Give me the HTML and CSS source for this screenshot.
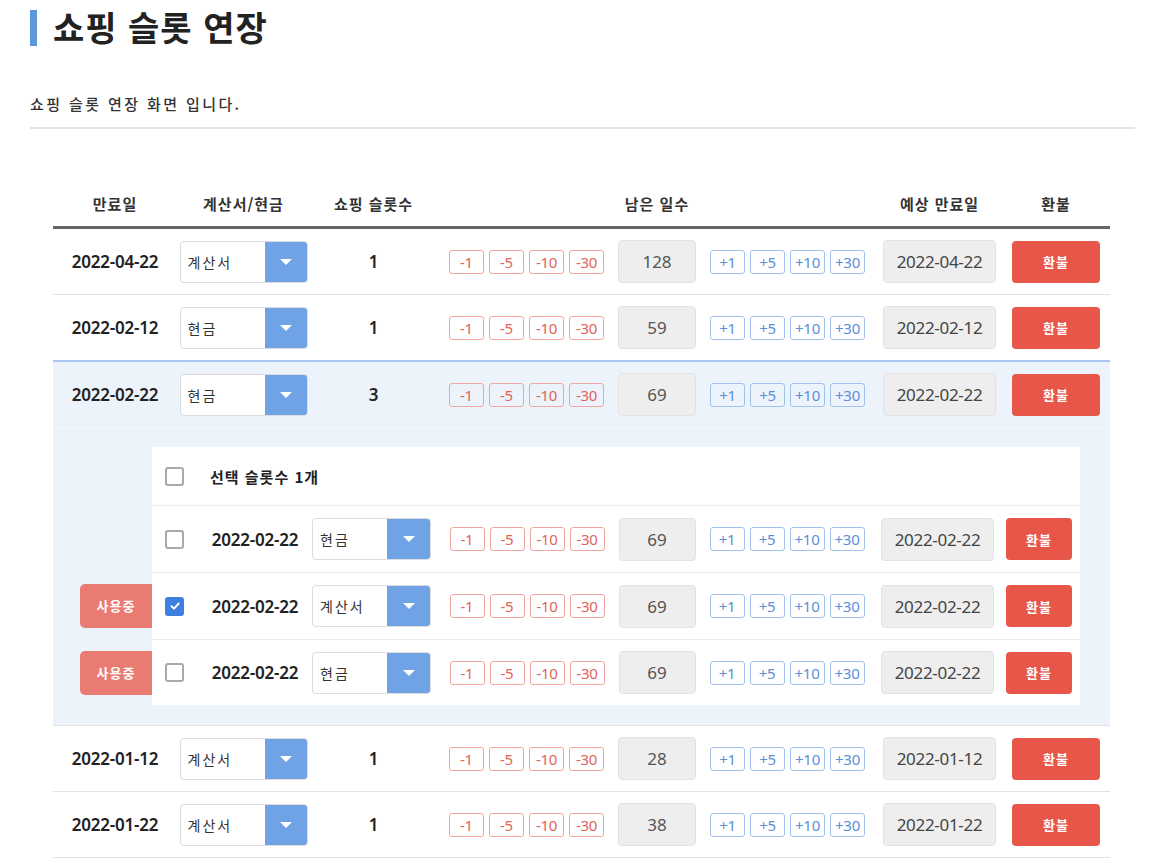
FILE: index.html
```html
<!DOCTYPE html>
<html lang="ko">
<head>
<meta charset="utf-8">
<title>쇼핑 슬롯 연장</title>
<link rel="stylesheet" href="styles.css">
</head>
<body>
<div class="page">
  <h1 class="title">쇼핑 슬롯 연장</h1>
  <p class="desc">쇼핑 슬롯 연장 화면 입니다.</p>

  <div class="table">
    <div class="row head">
      <div>만료일</div>
      <div>계산서/현금</div>
      <div>쇼핑 슬롯수</div>
      <div>남은 일수</div>
      <div>예상 만료일</div>
      <div>환불</div>
    </div>

    <div class="row">
      <div class="date">2022-04-22</div>
      <div><div class="select"><span>계산서</span><i class="caret"></i></div></div>
      <div class="count">1</div>
      <div class="days"><div class="btns minus"><b>-1</b><b>-5</b><b>-10</b><b>-30</b></div><div class="val">128</div><div class="btns plus"><b>+1</b><b>+5</b><b>+10</b><b>+30</b></div></div>
      <div><div class="dbox">2022-04-22</div></div>
      <div><button class="refund">환불</button></div>
    </div>

    <div class="row before-open">
      <div class="date">2022-02-12</div>
      <div><div class="select"><span>현금</span><i class="caret"></i></div></div>
      <div class="count">1</div>
      <div class="days"><div class="btns minus"><b>-1</b><b>-5</b><b>-10</b><b>-30</b></div><div class="val">59</div><div class="btns plus"><b>+1</b><b>+5</b><b>+10</b><b>+30</b></div></div>
      <div><div class="dbox">2022-02-12</div></div>
      <div><button class="refund">환불</button></div>
    </div>

    <div class="group">
      <div class="row open">
        <div class="date">2022-02-22</div>
        <div><div class="select"><span>현금</span><i class="caret"></i></div></div>
        <div class="count">3</div>
        <div class="days"><div class="btns minus"><b>-1</b><b>-5</b><b>-10</b><b>-30</b></div><div class="val">69</div><div class="btns plus"><b>+1</b><b>+5</b><b>+10</b><b>+30</b></div></div>
        <div><div class="dbox">2022-02-22</div></div>
        <div><button class="refund">환불</button></div>
      </div>
      <div class="detail">
        <div class="panel">
          <div class="prow phead">
            <span class="check"></span>
            <strong>선택 슬롯수 1개</strong>
          </div>
          <div class="prow">
            <div><span class="check"></span></div>
            <div class="date">2022-02-22</div>
            <div><div class="select sm"><span>현금</span><i class="caret"></i></div></div>
            <div class="days"><div class="btns minus"><b>-1</b><b>-5</b><b>-10</b><b>-30</b></div><div class="val sm">69</div><div class="btns plus"><b>+1</b><b>+5</b><b>+10</b><b>+30</b></div></div>
            <div><div class="dbox">2022-02-22</div></div>
            <div><button class="refund sm">환불</button></div>
          </div>
          <div class="prow">
            <span class="badge">사용중</span>
            <div><span class="check on"><svg viewBox="0 0 12 12" width="12" height="12"><path d="M2.5 6.2 L5 8.6 L9.6 3.6" fill="none" stroke="#fff" stroke-width="2" stroke-linecap="round" stroke-linejoin="round"/></svg></span></div>
            <div class="date">2022-02-22</div>
            <div><div class="select sm"><span>계산서</span><i class="caret"></i></div></div>
            <div class="days"><div class="btns minus"><b>-1</b><b>-5</b><b>-10</b><b>-30</b></div><div class="val sm">69</div><div class="btns plus"><b>+1</b><b>+5</b><b>+10</b><b>+30</b></div></div>
            <div><div class="dbox">2022-02-22</div></div>
            <div><button class="refund sm">환불</button></div>
          </div>
          <div class="prow last">
            <span class="badge">사용중</span>
            <div><span class="check"></span></div>
            <div class="date">2022-02-22</div>
            <div><div class="select sm"><span>현금</span><i class="caret"></i></div></div>
            <div class="days"><div class="btns minus"><b>-1</b><b>-5</b><b>-10</b><b>-30</b></div><div class="val sm">69</div><div class="btns plus"><b>+1</b><b>+5</b><b>+10</b><b>+30</b></div></div>
            <div><div class="dbox">2022-02-22</div></div>
            <div><button class="refund sm">환불</button></div>
          </div>
        </div>
      </div>
    </div>

    <div class="row">
      <div class="date">2022-01-12</div>
      <div><div class="select"><span>계산서</span><i class="caret"></i></div></div>
      <div class="count">1</div>
      <div class="days"><div class="btns minus"><b>-1</b><b>-5</b><b>-10</b><b>-30</b></div><div class="val">28</div><div class="btns plus"><b>+1</b><b>+5</b><b>+10</b><b>+30</b></div></div>
      <div><div class="dbox">2022-01-12</div></div>
      <div><button class="refund">환불</button></div>
    </div>

    <div class="row">
      <div class="date">2022-01-22</div>
      <div><div class="select"><span>계산서</span><i class="caret"></i></div></div>
      <div class="count">1</div>
      <div class="days"><div class="btns minus"><b>-1</b><b>-5</b><b>-10</b><b>-30</b></div><div class="val">38</div><div class="btns plus"><b>+1</b><b>+5</b><b>+10</b><b>+30</b></div></div>
      <div><div class="dbox">2022-01-22</div></div>
      <div><button class="refund">환불</button></div>
    </div>
  </div>
</div>
</body>
</html>
```
FILE: styles.css
```css
* { box-sizing: border-box; }
html, body { margin: 0; padding: 0; background: #fff; }
body {
  font-family: "Noto Sans", "Noto Sans CJK KR", sans-serif;
  color: #333;
}
.page { padding: 10px 27px 0 30px; }

.title {
  margin: 0;
  height: 36px;
  border-left: 7px solid #5f97dc;
  padding-left: 16px;
  font-size: 34px;
  line-height: 34px;
  font-weight: 700;
  letter-spacing: 1px;
  color: #222;
  font-family: "Noto Sans CJK KR", sans-serif;
}
.desc {
  margin: 48px 0 0;
  padding-bottom: 13px;
  border-bottom: 2px solid #e3e3e3;
  font-size: 15px;
  line-height: 20px;
  letter-spacing: 2.4px;
  font-weight: 500;
  font-family: "Noto Sans CJK KR", sans-serif;
  color: #333;
}

.table { margin: 52px 25px 0 23px; }

.row {
  display: grid;
  grid-template-columns: 124px 133px 127px 440px 125px 108px;
  align-items: center;
  height: 66px;
  border-bottom: 1px solid #e2e2e2;
  text-align: center;
}
.row > div { display: flex; justify-content: center; align-items: center; }
.row.head {
  height: 48px;
  border-bottom: 3px solid #666;
  font-size: 15px;
  font-weight: 700;
  letter-spacing: 1px;
  color: #333;
  font-family: "Noto Sans CJK KR", sans-serif;
}
.row.before-open { height: 67px; border-bottom: 2px solid #a9c7ee; }

.date { font-size: 17px; font-weight: 600; color: #222; letter-spacing: -0.2px; }
.count { font-size: 17px; font-weight: 600; color: #222; }

.select {
  display: flex;
  width: 128px;
  height: 42px;
  border: 1px solid #dcdcdc;
  border-radius: 4px;
  background: #fff;
  overflow: hidden;
  text-align: left;
}
.select span {
  flex: 1;
  padding-left: 7px;
  font-size: 14px;
  line-height: 40px;
  letter-spacing: 2px;
  color: #333;
  font-family: "Noto Sans CJK KR", sans-serif;
}
.select .caret {
  width: 42px;
  background: #6fa3e6;
  position: relative;
}
.select .caret::after {
  content: "";
  position: absolute;
  left: 50%;
  top: 50%;
  margin: -3px 0 0 -6px;
  border-left: 6px solid transparent;
  border-right: 6px solid transparent;
  border-top: 6px solid #fff;
}
.select.sm { width: 119px; }
.select.sm .caret { width: 43px; }

.days { gap: 14px; }
.btns { display: flex; gap: 5px; }
.btns b {
  display: block;
  min-width: 35px;
  height: 24px;
  padding: 0 4px;
  border: 1px solid;
  border-radius: 3px;
  font-size: 15px;
  font-weight: 400;
  line-height: 22px;
  letter-spacing: -0.3px;
  text-align: center;
}
.minus b { border-color: #f0a7a1; color: #e1635a; }
.plus b { border-color: #a2c2ee; color: #5a8fd8; }

.val {
  width: 78px;
  height: 43px;
  border: 1px solid #e2e2e2;
  border-radius: 4px;
  background: #eeeeee;
  font-size: 17px;
  line-height: 41px;
  color: #555;
  text-align: center;
}
.val.sm { width: 77px; }

.dbox {
  width: 113px;
  height: 43px;
  border: 1px solid #e2e2e2;
  border-radius: 4px;
  background: #eeeeee;
  font-size: 17px;
  line-height: 41px;
  letter-spacing: -0.3px;
  color: #444;
  text-align: center;
}

.refund {
  width: 88px;
  height: 42px;
  border: 0;
  border-radius: 4px;
  background: #e8564a;
  color: #fff;
  font-family: "Noto Sans CJK KR", sans-serif;
  font-size: 13px;
  font-weight: 700;
  letter-spacing: 1px;
  padding: 0;
}
.refund.sm { width: 66px; }

.group { background: #edf3fb; border-bottom: 1px solid #e2e2e2; }
.row.open { border-bottom: 1px solid #f6f9fd; }
.detail { padding: 19px 30px 20px 99px; }
.panel { background: #fff; }

.prow {
  position: relative;
  display: grid;
  grid-template-columns: 48px 110px 127px 440px 121px 82px;
  align-items: center;
  height: 67px;
  border-bottom: 1px solid #e6edf6;
}
.prow > div { display: flex; justify-content: center; align-items: center; }
.prow > div:first-child, .prow > .badge + div { justify-content: flex-start; padding-left: 13px; }
.prow > div:nth-of-type(3) { justify-content: flex-start; padding-left: 2px; }
.prow.last { border-bottom: 0; height: 65px; }
.prow.phead {
  display: flex;
  height: 59px;
  padding-left: 13px;
  gap: 26px;
}
.phead strong {
  font-size: 15px;
  font-weight: 700;
  letter-spacing: 1px;
  color: #222;
  font-family: "Noto Sans CJK KR", sans-serif;
}

.check {
  display: inline-flex;
  align-items: center;
  justify-content: center;
  width: 19px;
  height: 19px;
  border: 2px solid #a9a9a9;
  border-radius: 3px;
  background: #fff;
}
.check.on { background: #3e7fdf; border-color: #3e7fdf; }

.badge {
  position: absolute;
  left: -72px;
  top: 11px;
  width: 72px;
  height: 44px;
  border-radius: 5px 0 0 5px;
  background: #e97b72;
  color: #fff;
  font-family: "Noto Sans CJK KR", sans-serif;
  font-size: 13px;
  font-weight: 700;
  letter-spacing: 1px;
  line-height: 44px;
  text-align: center;
}
```
